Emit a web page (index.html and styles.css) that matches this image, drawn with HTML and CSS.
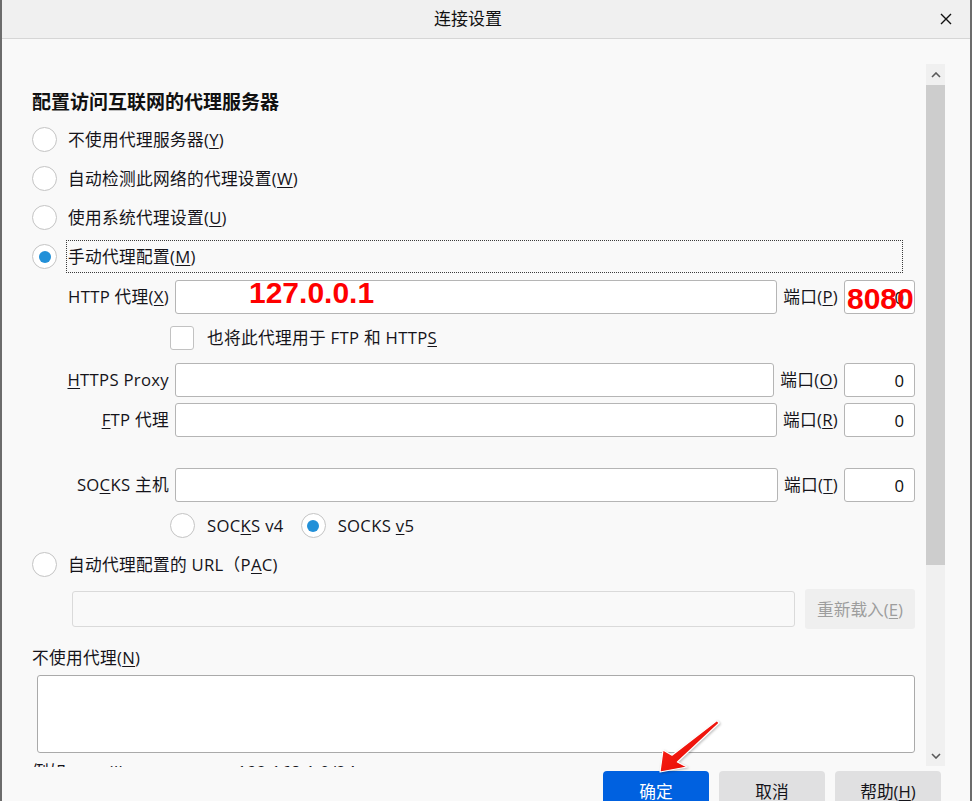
FILE: index.html
```html
<!DOCTYPE html>
<html lang="zh-CN">
<head>
<meta charset="utf-8">
<title>连接设置</title>
<link rel="stylesheet" href="styles.css">
</head>
<body>
<div class="window">
  <div class="titlebar">
    <div class="title">连接设置</div>
    <div class="close">
      <svg width="12" height="12" viewBox="0 0 12 12"><path d="M1 1 L11 11 M11 1 L1 11" stroke="#111" stroke-width="1.4" fill="none"/></svg>
    </div>
  </div>
  <div class="main">
    <div class="viewport">
      <div class="content">
        <h1 class="heading">配置访问互联网的代理服务器</h1>
        <div class="radio-list">
          <div class="radio-row"><span class="radio"></span><span class="radio-text">不使用代理服务器(<u>Y</u>)</span></div>
          <div class="radio-row"><span class="radio"></span><span class="radio-text">自动检测此网络的代理设置(<u>W</u>)</span></div>
          <div class="radio-row"><span class="radio"></span><span class="radio-text">使用系统代理设置(<u>U</u>)</span></div>
          <div class="radio-row"><span class="radio checked"></span><span class="radio-text focused">手动代理配置(<u>M</u>)</span></div>
        </div>

        <div class="field-row row-http">
          <span class="field-label">HTTP 代理(<u>X</u>)</span>
          <div class="input-wrap host-wrap">
            <input class="input" type="text" value="">
            <span class="annot annot-ip">127.0.0.1</span>
          </div>
          <span class="port-label">端口(<u>P</u>)</span>
          <div class="input-wrap port-wrap">
            <input class="input port" type="text" value="0">
            <span class="annot annot-port">8080</span>
          </div>
        </div>

        <div class="check-row">
          <span class="checkbox"></span><span class="check-text">也将此代理用于 FTP 和 HTTP<u>S</u></span>
        </div>

        <div class="field-row row-https">
          <span class="field-label"><u>H</u>TTPS Proxy</span>
          <div class="input-wrap host-wrap"><input class="input" type="text" value=""></div>
          <span class="port-label">端口(<u>O</u>)</span>
          <div class="input-wrap port-wrap"><input class="input port" type="text" value="0"></div>
        </div>

        <div class="field-row row-ftp">
          <span class="field-label"><u>F</u>TP 代理</span>
          <div class="input-wrap host-wrap"><input class="input" type="text" value=""></div>
          <span class="port-label">端口(<u>R</u>)</span>
          <div class="input-wrap port-wrap"><input class="input port" type="text" value="0"></div>
        </div>

        <div class="field-row row-socks">
          <span class="field-label">SO<u>C</u>KS 主机</span>
          <div class="input-wrap host-wrap"><input class="input" type="text" value=""></div>
          <span class="port-label">端口(<u>T</u>)</span>
          <div class="input-wrap port-wrap"><input class="input port" type="text" value="0"></div>
        </div>

        <div class="socks-row">
          <span class="radio"></span><span class="socks-text">SOC<u>K</u>S v4</span>
          <span class="radio checked socks-v5"></span><span class="socks-text">SOCKS <u>v</u>5</span>
        </div>

        <div class="pac-radio-row">
          <span class="radio"></span><span class="pac-text">自动代理配置的 URL（P<u>A</u>C)</span>
        </div>

        <div class="pac-row">
          <input class="input pac-input" type="text" value="" disabled>
          <button class="reload-btn" type="button" disabled>重新载入(<u>E</u>)</button>
        </div>

        <div class="noproxy-label">不使用代理(<u>N</u>)</div>
        <textarea class="noproxy-area"></textarea>
        <div class="example">例如 .mozilla.org, .net.nz, 192.168.1.0/24</div>
      </div>
    </div>
    <div class="scrollbar">
      <div class="sb-btn">
        <svg width="10" height="6" viewBox="0 0 10 6"><path d="M1 5 L5 1 L9 5" stroke="#5a5a5a" stroke-width="1.6" fill="none"/></svg>
      </div>
      <div class="sb-thumb"></div>
      <div class="sb-track"></div>
      <div class="sb-btn">
        <svg width="10" height="6" viewBox="0 0 10 6"><path d="M1 1 L5 5 L9 1" stroke="#5a5a5a" stroke-width="1.6" fill="none"/></svg>
      </div>
    </div>
  </div>
  <div class="footer">
    <button class="btn primary" type="button">确定</button>
    <button class="btn" type="button">取消</button>
    <button class="btn" type="button">帮助(<u>H</u>)</button>
  </div>
</div>

<svg class="arrow" width="972" height="801" viewBox="0 0 972 801">
  <defs>
    <linearGradient id="arrowFill" x1="0" y1="0" x2="1" y2="1">
      <stop offset="0" stop-color="#ff2a1a"/>
      <stop offset="1" stop-color="#e00000"/>
    </linearGradient>
  </defs>
  <polygon points="660,772 663,750 672,755.2 717,720.6 719.2,723 677.4,762 687,767" fill="url(#arrowFill)" stroke="#ffffff" stroke-width="1.2" stroke-linejoin="round"/>
</svg>
</body>
</html>
```

FILE: styles.css
```css
html, body {
  margin: 0;
  padding: 0;
}

body {
  font-family: "Open Sans", "Noto Sans CJK SC", sans-serif;
  font-size: 16.7px;
  letter-spacing: 0.3px;
  color: #15141a;
  background: #f9f9f9;
}

u {
  text-underline-offset: 2px;
}

.window {
  width: 972px;
  height: 801px;
  box-sizing: border-box;
  border-left: 2px solid #6c6c6c;
  border-right: 2px solid #6c6c6c;
  background: #f9f9f9;
  overflow: hidden;
  display: flex;
  flex-direction: column;
}

/* Title bar */
.titlebar {
  height: 38px;
  flex-shrink: 0;
  display: flex;
  align-items: center;
  background: #f0f0f0;
  border-bottom: 1px solid #d6d6d6;
}

.title {
  flex: 1;
  text-align: center;
  font-size: 17px;
  line-height: 24px;
  letter-spacing: 0;
  color: #111;
}

.close {
  width: 36px;
  box-sizing: border-box;
  padding-right: 12px;
  display: flex;
  justify-content: center;
  align-items: center;
}

.close svg {
  display: block;
}

/* Main scroll area */
.main {
  height: 728px;
  flex-shrink: 0;
  display: flex;
}

.viewport {
  flex: 1;
  overflow: hidden;
}

.content {
  padding: 0 11px 0 30px;
}

.heading {
  margin: 51px 0 0 0;
  height: 24px;
  font-size: 19px;
  line-height: 24px;
  font-weight: bold;
  letter-spacing: 0;
  color: #111;
}

.radio-list {
  margin-top: 6px;
}

.radio-row {
  height: 39px;
  display: flex;
  align-items: center;
}

.radio {
  width: 23px;
  height: 23px;
  border: 1px solid #c4c4c4;
  border-radius: 50%;
  background: #fff;
  flex-shrink: 0;
  display: flex;
  align-items: center;
  justify-content: center;
}

.radio.checked::after {
  content: "";
  width: 12px;
  height: 12px;
  border-radius: 50%;
  background: #2290d8;
}

.radio-text {
  margin-left: 9px;
  border: 1px dotted transparent;
  line-height: 24px;
  padding: 0 1px;
}

.radio-text.focused {
  flex: 1;
  margin-right: 12px;
  height: 33px;
  box-sizing: border-box;
  display: flex;
  align-items: center;
  border-color: #3a3a3a;
}

/* Field rows */
.field-row {
  height: 34px;
  display: flex;
  align-items: center;
  gap: 6px;
}

.row-http { margin-top: 4px; }
.row-https { margin-top: 13px; }
.row-ftp { margin-top: 6px; }
.row-socks { margin-top: 31px; }

.field-label {
  width: 137px;
  flex-shrink: 0;
  text-align: right;
  white-space: nowrap;
  line-height: 24px;
}

.port-label {
  white-space: nowrap;
  line-height: 24px;
}

.input-wrap {
  position: relative;
  height: 34px;
}

.host-wrap {
  flex: 1;
}

.port-wrap {
  width: 71px;
  flex-shrink: 0;
}

.input {
  display: block;
  width: 100%;
  height: 100%;
  box-sizing: border-box;
  margin: 0;
  border: 1px solid #b5b5b5;
  border-radius: 3px;
  background: #fff;
  font: inherit;
  color: #0c0c0d;
  padding: 0 8px;
  outline: none;
}

.input.port {
  text-align: right;
  padding-right: 10px;
}

.annot {
  position: absolute;
  font-family: "Liberation Sans", Arial, sans-serif;
  font-weight: bold;
  font-size: 30px;
  line-height: 30px;
  letter-spacing: 0;
  color: #ff0000;
  white-space: nowrap;
  pointer-events: none;
}

.annot-ip {
  left: 74px;
  top: -2px;
}

.annot-port {
  left: 3px;
  top: 4px;
}

/* Checkbox row */
.check-row {
  margin-top: 12px;
  height: 24px;
  padding-left: 138px;
  display: flex;
  align-items: center;
}

.checkbox {
  width: 22px;
  height: 22px;
  border: 1px solid #c2c2c2;
  border-radius: 3px;
  background: #fff;
  flex-shrink: 0;
}

.check-text {
  margin-left: 13px;
  line-height: 24px;
}

/* SOCKS version row */
.socks-row {
  margin-top: 11px;
  height: 25px;
  padding-left: 138px;
  display: flex;
  align-items: center;
}

.socks-text {
  margin-left: 12px;
  line-height: 24px;
}

.socks-v5 {
  margin-left: 17px;
}

/* PAC */
.pac-radio-row {
  margin-top: 14px;
  height: 25px;
  display: flex;
  align-items: center;
}

.pac-text {
  margin-left: 11px;
  line-height: 24px;
}

.pac-row {
  margin-top: 12px;
  height: 40px;
  padding-left: 40px;
  display: flex;
  align-items: center;
  gap: 10px;
}

.pac-input {
  flex: 1;
  height: 36px;
  width: auto;
  background: #f9f9f9;
  border-color: #dadada;
}

.reload-btn {
  width: 110px;
  height: 40px;
  flex-shrink: 0;
  border: none;
  border-radius: 3px;
  background: #efefef;
  color: #9d9d9d;
  font: inherit;
  padding: 0;
}

.noproxy-label {
  margin-top: 17px;
  line-height: 24px;
}

.noproxy-area {
  display: block;
  margin: 5px 0 0 5px;
  width: calc(100% - 5px);
  height: 78px;
  box-sizing: border-box;
  border: 1px solid #aaaaaa;
  border-radius: 3px;
  background: #fff;
  resize: none;
  font: inherit;
  outline: none;
}

.example {
  margin-top: 7px;
  line-height: 24px;
  white-space: nowrap;
}

/* Scrollbar */
.scrollbar {
  width: 19px;
  flex-shrink: 0;
  margin: 25px 25px 1px 0;
  display: flex;
  flex-direction: column;
  background: #f0f0f0;
}

.sb-btn {
  height: 21px;
  flex-shrink: 0;
  display: flex;
  align-items: center;
  justify-content: center;
}

.sb-thumb {
  height: 480px;
  flex-shrink: 0;
  background: #cdcdcd;
}

.sb-track {
  flex: 1;
}

/* Footer */
.footer {
  display: flex;
  justify-content: flex-end;
  gap: 10px;
  padding: 4px 29px 0 0;
}

.btn {
  width: 106px;
  height: 40px;
  flex-shrink: 0;
  border: none;
  border-radius: 4px;
  background: #e0e0e1;
  color: #15141a;
  font: inherit;
  padding: 0;
}

.btn.primary {
  background: #0061e0;
  color: #fff;
}

/* Annotation arrow */
.arrow {
  position: absolute;
  left: 0;
  top: 0;
  pointer-events: none;
  filter: drop-shadow(1px 1px 1px rgba(0, 0, 0, 0.25));
}
```
